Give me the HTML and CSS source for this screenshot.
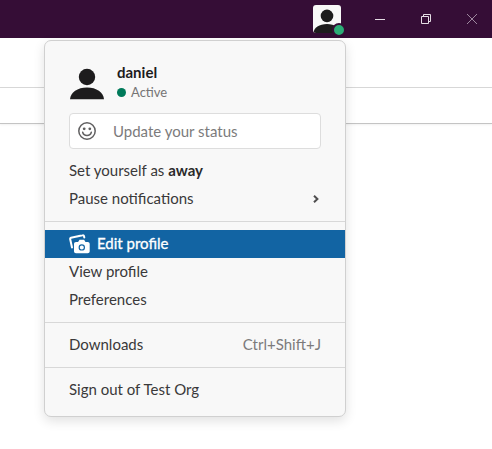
FILE: index.html
```html
<!DOCTYPE html>
<html lang="en">
<head>
<meta charset="utf-8">
<title>User menu</title>
<link rel="stylesheet" href="styles.css">
</head>
<body>
<header class="titlebar">
  <div class="avatar">
    <svg class="avatar-art" width="28" height="28" viewBox="0 0 28 28"><circle cx="14" cy="10.900" r="6.300"/><path d="M0.600 28c0-5.500 5.800-9 13.400-9s13.400 3.500 13.400 9z"/></svg>
    <span class="avatar-presence"></span>
  </div>
  <svg class="win" width="10" height="10" viewBox="0 0 10 10"><path d="M0 5.500h10"/></svg>
  <svg class="win" width="10" height="10" viewBox="0 0 10 10"><path d="M.5 2.500h7v7h-7zM2.500 2.500v-2h7v7h-2"/></svg>
  <svg class="win win-close" width="10" height="10" viewBox="0 0 10 10"><path d="M0 0l10 10M10 0L0 10"/></svg>
</header>
<div class="toolbar"></div>
<div class="subbar"></div>

<nav class="menu">
  <div class="profile">
    <svg width="36" height="36" viewBox="0 0 36 36"><circle cx="18" cy="12" r="8.200"/><path d="M1 34.200C1.500 27.400 8.500 22.500 18 22.500s16.500 4.900 17 11.700z"/></svg>
    <div class="who">
      <div class="name">daniel</div>
      <div class="presence"><span class="dot"></span>Active</div>
    </div>
  </div>
  <div class="status">
    <svg width="18" height="18" viewBox="0 0 18 18"><circle class="face" cx="9" cy="9" r="8.200"/><circle cx="6.200" cy="6.800" r="1.400"/><circle cx="11.800" cy="6.800" r="1.400"/><path class="face" d="M4.700 10.300c.5 2 2.200 3.200 4.300 3.200s3.800-1.200 4.300-3.200"/></svg>
    <span class="placeholder">Update your status</span>
  </div>
  <div class="item">Set yourself as&nbsp;<b>away</b></div>
  <div class="item"><span class="pause">Pause notifications</span><svg class="chevron" width="6" height="8" viewBox="0 0 6 8"><path d="M1 .8L4.400 4 1 7.200"/></svg></div>
  <hr>
  <div class="item selected">
    <svg class="camera" width="22" height="20" viewBox="0 0 22 20"><path class="frame" d="M3 13.500L1.200 5.200c-.2-.8.100-1.200.8-1.400L13.600 1.300c.8-.2 1.200.1 1.400.8L15.300 3.500"/><path fill-rule="evenodd" d="M7 8H9.100l1.400-2.300h4.600L16.500 8h2.200c1.200 0 2 .8 2 2v7.200c0 1.200-.8 2-2 2H7c-1.200 0-2-.8-2-2V10c0-1.200.8-2 2-2zM12.800 10.200a3.200 3.200 0 1 0 0 6.400 3.200 3.200 0 1 0 0-6.400zm0 1.200a2 2 0 1 1 0 4 2 2 0 1 1 0-4z"/></svg>
    <span class="label">Edit profile</span>
  </div>
  <div class="item">View profile</div>
  <div class="item">Preferences</div>
  <hr>
  <div class="item"><span class="downloads">Downloads</span><span class="shortcut">Ctrl+Shift+J</span></div>
  <hr>
  <div class="item">Sign out of Test Org</div>
</nav>
</body>
</html>
```

FILE: styles.css
```css
* { box-sizing: border-box; }
body {
  margin: 0;
  height: 449px;
  overflow: hidden;
  background: #fff;
  color: #3a393a;
  font: 15px/26px Lato, sans-serif;
}
svg { display: block; flex: none; }
.titlebar {
  display: flex;
  align-items: center;
  gap: 36px;
  height: 38px;
  padding: 0 15px 0 313px;
  background: #350d36;
}
.avatar {
  position: relative;
  width: 28px;
  height: 28px;
  margin-right: -2px;
}
.avatar-art { border-radius: 3px; background: #f8f8f8; fill: #1d1c1d; }
.avatar-presence {
  position: absolute;
  right: -5px;
  bottom: -4px;
  width: 14px;
  height: 14px;
  border: 2px solid #350d36;
  border-radius: 50%;
  background: #2bac76;
}
.win { fill: none; stroke: #e4dce4; stroke-width: 1; }
.win-close { stroke: #9d879e; }
.toolbar { height: 50px; border-bottom: 1px solid #d8d8d8; }
.subbar { height: 36px; border-bottom: 1px solid #c4c4c4; box-shadow: 0 1px 2px rgba(0,0,0,.06); }
.menu {
  position: absolute;
  top: 40px;
  left: 44px;
  width: 302px;
  height: 377px;
  padding: 21px 0 12px;
  border: 1px solid #d0d0d0;
  border-radius: 7px;
  background: #f8f8f8;
  box-shadow: 0 4px 12px rgba(0,0,0,.12);
}
.profile { display: flex; align-items: center; height: 42px; margin: 0 24px; fill: #1d1c1d; }
.who { margin-left: 12px; padding-bottom: 2px; }
.name { font-weight: 700; line-height: 20px; color: #1d1c1d; }
.presence { display: flex; align-items: center; line-height: 20px; font-size: 13px; color: #757475; }
.dot { width: 9px; height: 9px; margin: 1px 5px 0 0; border-radius: 50%; background: #007a5a; }
.status {
  display: flex;
  align-items: center;
  height: 36px;
  margin: 9px 24px 8px;
  padding-left: 8px;
  border: 1px solid #dddddd;
  border-radius: 4px;
  background: #fff;
  color: #7c7b7c;
  fill: #616061;
}
.face { fill: none; stroke: #616061; stroke-width: 1.500; stroke-linecap: round; }
.placeholder { margin-left: 17px; }
.item { display: flex; align-items: center; height: 28px; padding: 0 24px 2px; white-space: nowrap; }
.item b { font-weight: 700; color: #2b2a2b; }
.chevron { margin: 2px 2px 0 auto; fill: none; stroke: #4f4e4f; stroke-width: 2; }
.selected { background: #1264a3; color: #fff; fill: #fff; }
.camera { margin: 2px 6px 0 0; }
.frame { fill: none; stroke: #fff; stroke-width: 2; stroke-linejoin: round; stroke-linecap: round; }
.label { -webkit-text-stroke: .3px #fff; }
.shortcut { margin-left: auto; color: #7c7b7c; }
hr { height: 1px; margin: 8px 0; border: 0; background: #d8d8d8; }
```
